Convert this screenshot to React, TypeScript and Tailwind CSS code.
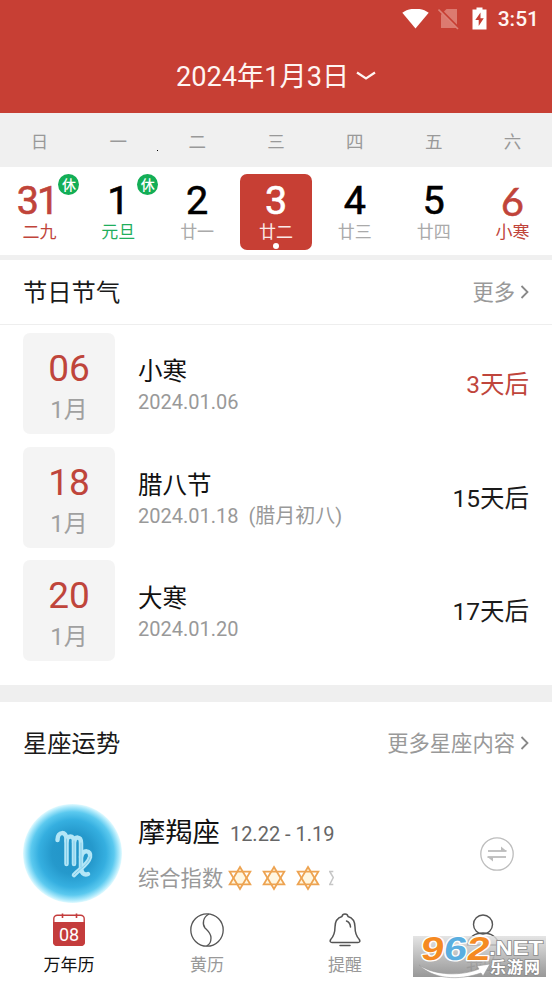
const weekNames = ["日", "一", "二", "三", "四", "五", "六"];

const days = [
  { num: "31", lunar: "二九", numColor: "text-[#c0443a] tracking-[-2px] -ml-[5px]", lunarColor: "text-[#c0443a]", rest: true },
  { num: "1", lunar: "元旦", numColor: "text-black", lunarColor: "text-[#1fae5c]", rest: true },
  { num: "2", lunar: "廿一", numColor: "text-black", lunarColor: "text-[#aaaaaa]" },
  { num: "3", lunar: "廿二", numColor: "text-white", lunarColor: "text-[#fbe9e7]", active: true },
  { num: "4", lunar: "廿三", numColor: "text-black", lunarColor: "text-[#aaaaaa]" },
  { num: "5", lunar: "廿四", numColor: "text-black", lunarColor: "text-[#aaaaaa]" },
  { num: "6", lunar: "小寒", numColor: "text-[#c0443a] font-[Lato]", lunarColor: "text-[#c0443a]" },
];

const festivals = [
  { day: "06", name: "小寒", date: "2024.01.06", note: "", left: "3天后", leftColor: "text-[#bf453b]" },
  { day: "18", name: "腊八节", date: "2024.01.18", note: "(腊月初八)", left: "15天后", leftColor: "text-[#1a1a1a]" },
  { day: "20", name: "大寒", date: "2024.01.20", note: "", left: "17天后", leftColor: "text-[#1a1a1a]" },
];

function StatusBar() {
  return (
    <div className="flex h-[38px] items-center justify-end pr-[13px]">
      <svg width="27" height="20" viewBox="0 0 27 20" fill="#fff">
        <path d="M13.5 19.5 L0.3 3.8 C4 1 8.5 -0.3 13.5 -0.3 C18.500 -0.3 23 1 26.700 3.800 Z" />
      </svg>
      <svg className="ml-[9px]" width="22" height="22" viewBox="0 0 22 22">
        <path d="M8.500 1 H19 V20 H3 V6.500 Z" fill="#dc7a70" />
        <path d="M1.500 1 L21 20.500" stroke="#c73f34" strokeWidth="2.500" />
        <path d="M0.500 1.500 L20 21" stroke="#dd8278" strokeWidth="1.600" />
      </svg>
      <svg className="-mt-px ml-[12px]" width="15" height="23" viewBox="0 0 15 23">
        <path d="M4.500 0.500 H10.500 V2.500 H14.500 V22.500 H0.500 V2.500 H4.500 Z" fill="#fff" />
        <path d="M8.500 5.500 L3.300 13 H6.700 V19 L11.800 11.300 H8.500 Z" fill="#c73f34" />
      </svg>
      <span className="ml-[11px] text-[21px] leading-none font-medium text-[#fff5f2]">3:51</span>
    </div>
  );
}

function Week() {
  return (
    <div className="grid h-[88px] grid-cols-7 bg-white">
      {days.map((d) => (
        <div key={d.num} className="flex justify-center pt-[7px]">
          <div
            className={
              d.active
                ? "relative flex h-[76px] w-[72px] flex-col items-center rounded-[7px] bg-[#c73f34]"
                : "relative flex h-[76px] w-[72px] flex-col items-center"
            }
          >
            <span
              className={`mt-[8px] h-[40px] text-[39.500px] leading-[38px] [-webkit-text-stroke:0.600px] ${d.numColor}`}
            >
              {d.num}
            </span>
            <span className={`text-[17px] leading-[20px] ${d.lunarColor}`}>{d.lunar}</span>
            {d.rest && (
              <span className="absolute top-0 right-[-4px] flex size-[21px] items-center justify-center rounded-full bg-[#13ae56] text-[14px] leading-none font-medium text-white">
                休
              </span>
            )}
            {d.active && (
              <span className="absolute bottom-[1px] size-[6px] rounded-full bg-white" />
            )}
          </div>
        </div>
      ))}
    </div>
  );
}

function SectionHead({ title, more }: { title: string; more: string }) {
  return (
    <div className="flex h-[64px] items-center justify-between pt-[2px] pr-[23px] pl-[23px]">
      <h2 className="text-[24.300px] leading-none text-[#1a1a1a]">{title}</h2>
      <div className="flex items-center text-[21.300px] leading-none text-[#999999]">
        <span>{more}</span>
        <svg className="-mt-[2px] ml-[5px]" width="9" height="14" viewBox="0 0 9 14" fill="none" stroke="#888888" strokeWidth="1.800">
          <path d="M1.500 1 L7.500 7 L1.500 13" />
        </svg>
      </div>
    </div>
  );
}

function FestivalList() {
  return (
    <div className="flex flex-col gap-[12.500px] pt-[8px]">
      {festivals.map((f) => (
        <div key={f.day} className="flex h-[101px] pr-[23px] pl-[23px]">
          <div className="flex w-[92px] flex-col items-center rounded-[7px] bg-[#f4f4f4]">
            <span className="mt-[18px] text-[37px] leading-[36px] text-[#bf453b]">{f.day}</span>
            <span className="mt-[9px] text-[24px] leading-[28px] text-[#a0a0a0]">1月</span>
          </div>
          <div className="ml-[23px] pt-[24px]">
            <div className="text-[24.500px] leading-[30px] text-[#111111]">{f.name}</div>
            <div className="flex gap-[10px] text-[20px] leading-[30px] text-[#999999]">
              <span>{f.date}</span>
              {f.note && <span>{f.note}</span>}
            </div>
          </div>
          <div className={`ml-auto self-center pt-[3px] text-[24.500px] leading-[30px] ${f.leftColor}`}>
            {f.left}
          </div>
        </div>
      ))}
    </div>
  );
}

function Star() {
  return (
    <svg width="24" height="26" viewBox="0 0 24 26" fill="#fff6e0" stroke="#eda351" strokeWidth="1.800">
      <path d="M12 2 L22.300 19.300 H1.700 Z" />
      <path d="M12 24 L1.700 6.700 H22.300 Z" fill="none" />
    </svg>
  );
}

function Capricorn() {
  return (
    <div className="flex size-[99px] items-center justify-center rounded-full bg-[radial-gradient(circle_closest-side,#2294c7_0%,#2599cc_42%,#35afe0_68%,#5bc9ef_84%,#a9e8fb_94%,#e2faff_100%)]">
      <svg width="40" height="50" viewBox="0 0 40 50" fill="none" strokeLinecap="round" strokeLinejoin="round">
        <g stroke="#b3e6f7" strokeWidth="4.500">
          <path d="M4.500 11 C4.500 2 13.500 2 13.500 10 V35" />
          <path d="M13.500 12 C14 6 21 6 21 12 V35" />
          <path d="M21 13 C22 7 28 7 28 14 V38 C28 44 31 46.500 35 45" />
          <path d="M28 28 C30 20 38.500 21 37 28 C35 36 26 40 21 46" />
        </g>
        <g stroke="#7fc9e6" strokeWidth="0.900">
          <path d="M13.500 10 V35 M21 12 V35 M28 14 V38" />
          <path d="M37 28 C35 36 26 40 21 46" />
        </g>
      </svg>
    </div>
  );
}

function Horoscope() {
  return (
    <div className="flex pt-[37px] pl-[23px]">
      <Capricorn />
      <div className="ml-[16px] pt-[11px]">
        <div className="flex items-center">
          <span className="text-[27.300px] leading-[36px] text-[#111111]">摩羯座</span>
          <span className="ml-[10px] pt-[1px] text-[20px] leading-[30px] text-[#666666]">
            12.22 - 1.19
          </span>
        </div>
        <div className="mt-[12px] flex h-[30px] items-center">
          <span className="pt-[2px] text-[21.300px] leading-[30px] text-[#999999]">综合指数</span>
          <div className="ml-[5px] flex items-center gap-[10px]">
            <Star />
            <Star />
            <Star />
            <svg className="-ml-[1px]" width="5" height="16" viewBox="0 0 5 16" fill="none" stroke="#c6c6c6" strokeWidth="1.500">
              <path d="M0 1.500 H4.300 M1 2 L4.300 7.500 L1 14 M0 14.500 H4.300" />
            </svg>
          </div>
        </div>
      </div>
      <svg className="mt-[33px] mr-[38px] ml-auto" width="34" height="34" viewBox="0 0 34 34" fill="none" stroke="#bdbdbd">
        <circle cx="17" cy="17" r="16.200" strokeWidth="1.300" />
        <path d="M8 14 H26.500" strokeWidth="1.800" />
        <path d="M7.500 20 H26" strokeWidth="1.800" />
        <path d="M21 9.500 L26.500 14 H21 Z M13 24.500 L7.500 20 H13 Z" fill="#bdbdbd" stroke="none" />
      </svg>
    </div>
  );
}

function TabBar() {
  return (
    <div className="grid h-[72px] grid-cols-4 text-[17px] leading-[20px] text-[#999999]">
      <div className="flex flex-col items-center text-[#111111]">
        <div className="relative mt-[3px] h-[33px] w-[32px]">
          <svg width="32" height="33" viewBox="0 0 32 33">
            <rect x="0.800" y="2.300" width="30.400" height="29.900" rx="3.500" fill="#fff" stroke="#c43c3c" strokeWidth="1.400" />
            <path d="M0 9 H32 V29 Q32 33 28 33 H4 Q0 33 0 29 Z" fill="#c43c3c" />
            <path d="M9.500 0.500 V5 M23.500 0.500 V5" stroke="#c43c3c" strokeWidth="1.600" />
          </svg>
          <span className="absolute inset-x-0 top-[12px] text-center text-[18px] leading-[20px] text-white">
            08
          </span>
        </div>
        <span className="mt-[9px]">万年历</span>
      </div>
      <div className="flex flex-col items-center">
        <svg className="mt-[3px]" width="34" height="34" viewBox="0 0 34 34" fill="none" stroke="#555555" strokeWidth="1.300">
          <circle cx="17" cy="17" r="16.200" />
          <path d="M19 1 C13 4 12 11 15 15 C18 18 21 20 21 25 C21 29 19 32 16.500 33" />
        </svg>
        <span className="mt-[8px]">黄历</span>
      </div>
      <div className="flex flex-col items-center">
        <svg className="mt-[3px]" width="32" height="34" viewBox="0 0 32 34" fill="none" stroke="#555555" strokeWidth="1.500" strokeLinejoin="round" strokeLinecap="round">
          <path d="M13 3.500 C13.500 0.300 18.500 0.300 19 3.500 C24 5 26 9 26 14 C26 21 27.500 23.500 30.300 26.500 C31.500 28.500 30.500 29.500 29 29.500 H3 C1.500 29.500 0.500 28.500 1.700 26.500 C4.500 23.500 6 21 6 14 C6 9 8 5 13 3.500 Z" />
          <path d="M17.500 8 C20 9 21.300 11 21.500 14" />
          <path d="M11 32.500 H21" />
        </svg>
        <span className="mt-[8px]">提醒</span>
      </div>
      <div className="flex flex-col items-center">
        <svg className="mt-[4px]" width="34" height="33" viewBox="0 0 34 33" fill="none" stroke="#555555" strokeWidth="1.400">
          <circle cx="17" cy="10.500" r="9.500" />
          <path d="M1.500 31 C2 15 32 15 32.500 31 Z" />
        </svg>
        <span className="mt-[8px]">我的</span>
      </div>
    </div>
  );
}

function SiteBadge() {
  return (
    <div className="absolute top-[936px] left-[413px] h-[41px] w-[133px] bg-linear-to-b from-[#dedede]/80 to-[#868686]/85">
      <svg className="overflow-visible" width="133" height="41" viewBox="0 0 133 41">
        <path d="M6 29 C22 40 49 40 66 33 L64 30 L77 28 L70 40 L68 37 C45 45 20 43 6 29 Z" fill="#fff" stroke="#999" strokeWidth="0.600" />
        <g
          transform="translate(7 24) skewX(-7)"
          fontFamily="Liberation Sans, sans-serif"
          fontWeight="bold"
          fontSize="33"
          stroke="#fff"
          strokeWidth="2.500"
          paintOrder="stroke"
          strokeLinejoin="round"
        >
          <text x="0" y="0" textLength="23" lengthAdjust="spacingAndGlyphs" fill="#f58a22">9</text>
          <text x="23" y="0" textLength="23" lengthAdjust="spacingAndGlyphs" fill="#5aaee0">6</text>
          <text x="46" y="0" textLength="23" lengthAdjust="spacingAndGlyphs" fill="#f58a22">2</text>
        </g>
        <g fill="#fff" stroke="#8a8a8a" strokeWidth="1.500" paintOrder="stroke" fontWeight="bold">
          <text x="76" y="19" fontFamily="Liberation Sans, sans-serif" fontSize="20" textLength="54" lengthAdjust="spacingAndGlyphs">
            .NET
          </text>
          <text x="77" y="37" fontFamily="Noto Sans CJK SC, sans-serif" fontSize="16" textLength="50">
            乐游网
          </text>
        </g>
      </svg>
    </div>
  );
}

export default function App() {
  return (
    <div className="relative h-[983px] w-full overflow-hidden bg-white font-['Roboto','Noto_Sans_CJK_SC',sans-serif]">
      <header className="h-[113px] bg-[#c73f34]">
        <StatusBar />
        <div className="flex h-[76px] items-center justify-center text-[27.200px] leading-none text-[#fff5f2]">
          <span className="pt-[3px]">2024年1月3日</span>
          <svg className="ml-[7px]" width="20" height="10" viewBox="0 0 20 10" fill="none" stroke="#fff5f2" strokeWidth="2.200">
            <path d="M1 1.500 L10 7.500 L19 1.500" />
          </svg>
        </div>
      </header>

      <div className="relative grid h-[54px] grid-cols-7 items-center bg-[#f0f0f0] pt-[4px] text-center text-[17.500px] text-[#999999]">
        {weekNames.map((name) => (
          <span key={name}>{name}</span>
        ))}
        <i className="absolute top-[37px] left-[157px] size-px bg-black" />
      </div>
      <Week />

      <section className="border-t-[5px] border-[#f0f0f0]">
        <SectionHead title="节日节气" more="更多" />
        <div className="h-px bg-[#eeeeee]" />
        <FestivalList />
      </section>

      <section className="mt-[24px] border-t-[17px] border-[#efefef] pt-[9px]">
        <SectionHead title="星座运势" more="更多星座内容" />
        <div className="-mt-[8px]">
          <Horoscope />
        </div>
      </section>

      <nav className="mt-[7px]">
        <TabBar />
      </nav>
      <SiteBadge />
    </div>
  );
}
